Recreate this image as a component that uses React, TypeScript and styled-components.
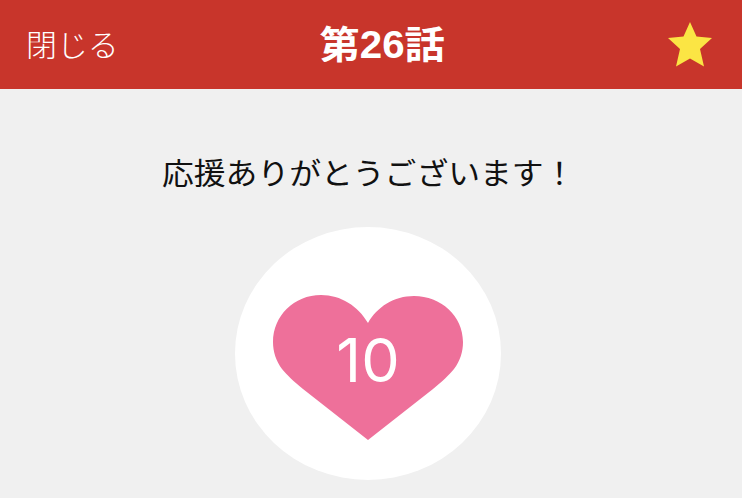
import React from "react";
import styled, { createGlobalStyle } from "styled-components";

const Global = createGlobalStyle`
  html, body { margin: 0; padding: 0; background: #f0f0f0; }
  body { font-family: "Noto Sans CJK JP", "Liberation Sans", sans-serif; }
`;
const Page = styled.div`
  width: 742px; height: 498px; overflow: hidden; background: #f0f0f0;
  display: flex; flex-direction: column; align-items: flex-start;
`;
const Header = styled.header`
  width: 100%; height: 89px; flex: none; background: #c8352b; color: #fff;
  display: flex; align-items: center; justify-content: space-between;
  padding: 0 30px 0 26px; box-sizing: border-box;
`;
const Close = styled.span`
  font-size: 30px; font-weight: 300; line-height: 1; margin-top: -4px;
  transform: scaleX(1.03); transform-origin: left center;
`;
const Title = styled.h1`
  margin: 0 20px 0 0; font-family: "Liberation Sans", "Noto Sans CJK JP", sans-serif;
  font-size: 38px; font-weight: 700; line-height: 1; transform: scaleX(1.06);
`;
const Star = styled.svg`width: 44px; height: 45px; flex: none; margin-top: -1px;`;
const Message = styled.p`
  margin: 63px 0 0 162px; font-size: 30px; line-height: 38px; color: #111; font-weight: 400;
  white-space: nowrap; transform: scaleX(1.06); transform-origin: left center;
`;
const Circle = styled.div`
  margin: 37px 0 0 235px; width: 266px; height: 253px; flex: none; border-radius: 50%; background: #fff;
  display: flex; align-items: center; justify-content: center;
`;
const Heart = styled.div`
  width: 190px; height: 145px; position: relative; display: flex; align-items: center; justify-content: center;
  margin-top: 28px;
`;
const HeartSvg = styled.svg`position: absolute; inset: 0; width: 100%; height: 100%;`;
const Count = styled.span`
  position: relative; color: #fff; font-family: Inter, sans-serif; font-weight: 400; font-size: 61px; line-height: 1;
  margin-bottom: 14px;
`;

export default function App() {
  return (
    <Page>
      <Global />
      <Header>
        <Close>閉じる</Close>
        <Title>第26話</Title>
        <Star viewBox="0 0 44 45">
          <path d="M22 0L28.5 14.5L44 16L32 27L36 44.5L22 36.5L8 44.5L12 27L0 16L15.5 14.5Z" fill="#fbe544" />
        </Star>
      </Header>
      <Message>応援ありがとうございます！</Message>
      <Circle>
        <Heart>
          <HeartSvg viewBox="0 0 190 145">
            <path d="M95 145L30 94C20 86 14 80 9 74C3 66 0 57 0 47C0 21 21 0 48 0C68 0 85 11 95 28C104 12 121 1 141 1C168 1 190 21 190 47C190 57 187 66 181 74C176 80 170 86 160 94Z" fill="#ee709a" />
          </HeartSvg>
          <Count>10</Count>
        </Heart>
      </Circle>
    </Page>
  );
}
